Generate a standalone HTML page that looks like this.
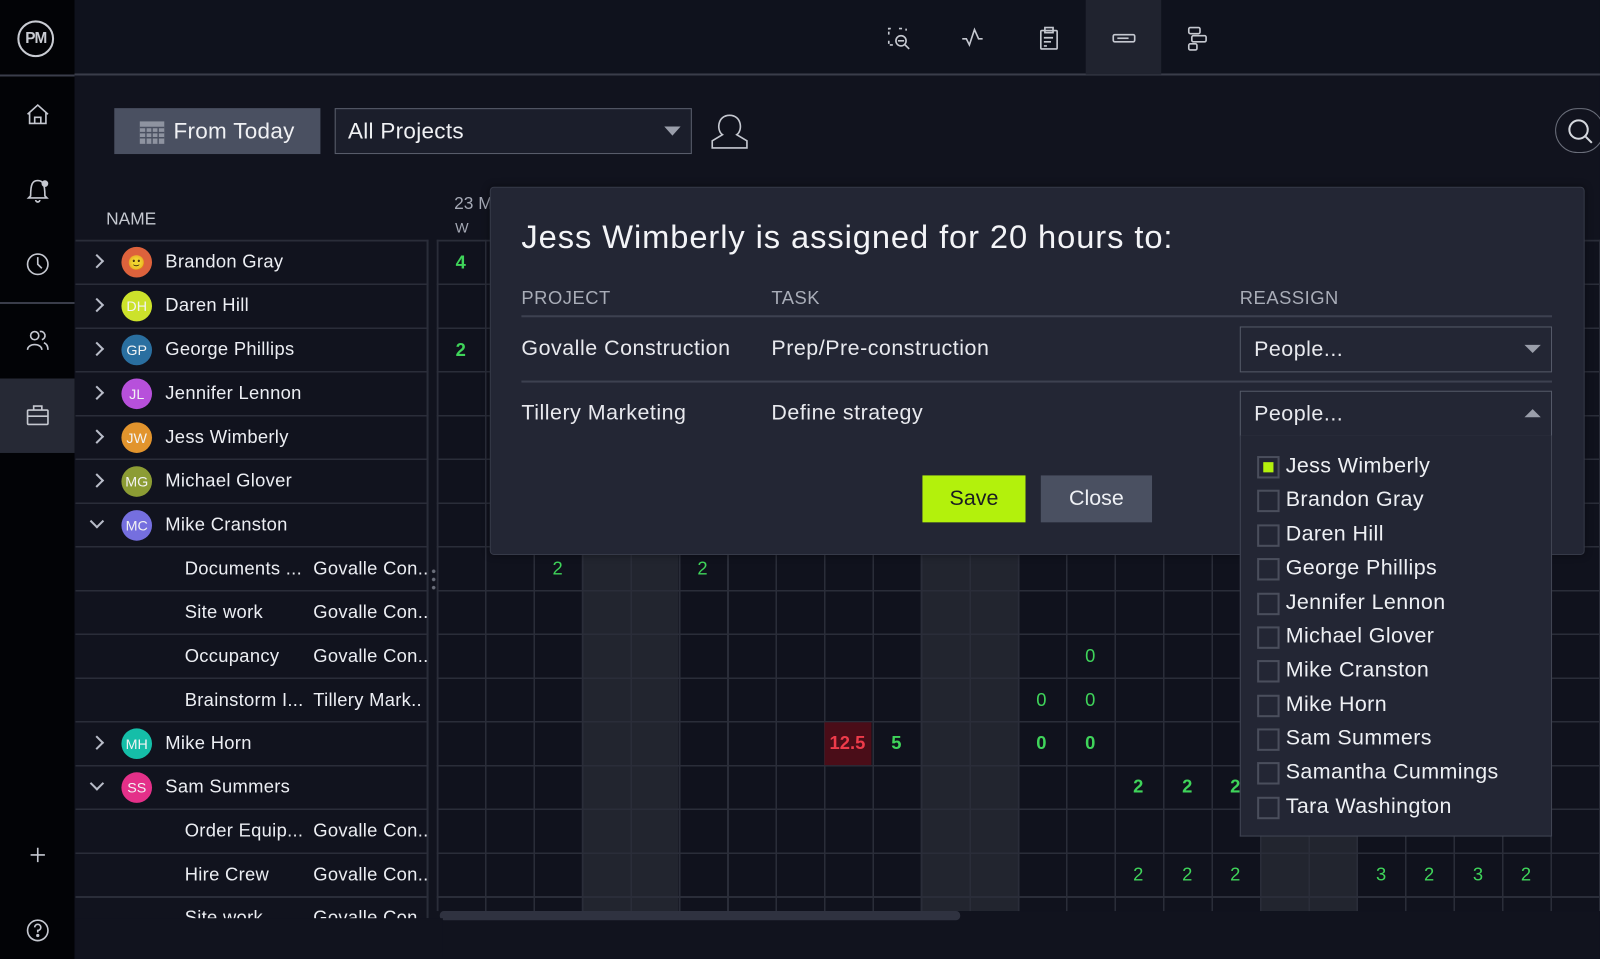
<!DOCTYPE html>
<html><head><meta charset="utf-8"><style>
*{margin:0;padding:0;box-sizing:border-box}
html,body{width:1600px;height:959px;overflow:hidden;background:#11131e}
#w{position:absolute;left:0;top:0;width:1568px;height:940px;transform:scale(1.0204,1.0202);transform-origin:0 0;font-family:"Liberation Sans",sans-serif;color:#e8e9ee;background:#11131e}
.a{position:absolute}
.t{position:absolute;white-space:nowrap}
svg{position:absolute;overflow:visible}
.nm{font-size:18px;color:#eceef3;letter-spacing:.3px}
.av{position:absolute;width:30px;height:30px;border-radius:50%;color:#fff;font-size:14px;line-height:30px;text-align:center;opacity:.95}
.ch{position:absolute;left:90px;width:10px;height:10px;border-right:2px solid #b8bcc8;border-top:2px solid #b8bcc8;transform:rotate(45deg)}
.g{position:absolute;color:#3fd45a;font-size:18px;text-align:center;width:47px}
.b{font-weight:bold}
.cb{position:absolute;left:16px;width:22px;height:22px;border:2px solid #4a4e5c}
.dl{position:absolute;left:44px;font-size:21px;color:#eef0f4;white-space:nowrap;letter-spacing:.4px}
.md{letter-spacing:.5px}
</style></head><body><div id="w">
<div class="a" style="left:0;top:0;width:1568px;height:74px;background:#0f121d;border-bottom:2px solid #3a3d4a"></div>
<div class="a" style="left:1064px;top:0;width:74px;height:73px;background:#20232f"></div>
<div class="a" style="left:0;top:0;width:73px;height:940px;background:#020306"></div>
<div class="a" style="left:0;top:73px;width:73px;height:2px;background:#3a3d4a"></div>
<div class="a" style="left:0;top:296px;width:73px;height:2px;background:#3a3d4a"></div>
<div class="a" style="left:0;top:371px;width:73px;height:73px;background:#262935"></div>
<div class="a" style="left:17px;top:20px;width:36px;height:36px;border:2.5px solid #c9ccd3;border-radius:50%;font-size:15px;font-weight:bold;color:#c9ccd3;text-align:center;line-height:31px;letter-spacing:-1px">PM</div>
<svg width="73" height="940" style="left:0;top:0" fill="none" stroke="#c5c8d0" stroke-width="1.6">
<path d="M27 112 L37 103 L47 112 M29 110 V121 H45 V110 M34 121 V115 H40 V121"/>
<path d="M30 192 C30 180 32 177 37 177 C42 177 44 180 44 192 L46 194 H28 Z M35 196 A2 2 0 0 0 39 196"/><circle cx="44" cy="180" r="2.5" fill="#c5c8d0"/>
<circle cx="37" cy="259" r="10"/><path d="M37 252 V259 L41 263"/>
<circle cx="34" cy="329" r="4"/><path d="M27 343 C27 336 41 336 41 343 M39 325 A4 4 0 0 1 41 333 M43 336 C46 337 47 340 47 343"/>
<rect x="27" y="402" width="20" height="14" rx="1"/><path d="M33 402 V398 H41 V402 M27 408 H47"/>
<path d="M37 831 V845 M30 838 H44"/>
<circle cx="37" cy="912" r="10"/><path d="M34 909 A3 3 0 1 1 37 912 V914"/><circle cx="37" cy="917" r=".8" fill="#c5c8d0"/>
</svg>
<svg width="400" height="74" style="left:840px;top:0" fill="none" stroke="#c5c8d0" stroke-width="1.6">
<path d="M31 34 V28 H35 M41 28 H44 M48 28 V30 M31 40 V44 H35" stroke-dasharray="3 2"/><circle cx="43" cy="40" r="5"/><path d="M40 40 H46 M47 44 L51 48"/>
<path d="M103 38 H107 L110 44 L115 29 L119 38 H123"/>
<rect x="180" y="30" width="16" height="18" rx="1"/><rect x="184" y="27" width="8" height="5"/><path d="M183 37 H192 M183 41 H190 M183 45 H186"/>
<rect x="251" y="34" width="21" height="7" rx="1.5"/><path d="M255 37.5 H266"/>
<rect x="325" y="27" width="11" height="6" rx="1.5"/><rect x="328" y="35" width="14" height="6" rx="1.5"/><rect x="325" y="43" width="8" height="6" rx="1.5"/>
</svg>
<div class="a" style="left:112px;top:106px;width:202px;height:45px;background:#4a5061"></div>
<svg width="24" height="22" style="left:137px;top:119px"><rect x="0" y="0" width="24" height="22" fill="#8e93a0"/><g stroke="#4a5061" stroke-width="1.4"><path d="M0 6H24M0 11H24M0 16H24M6 6V22M12 6V22M18 6V22"/></g></svg>
<div class="t" style="left:170px;top:116px;font-size:22px;color:#f0f1f4;letter-spacing:.3px">From Today</div>
<div class="a" style="left:328px;top:106px;width:350px;height:45px;background:#1b1e2b;border:1.5px solid #5a5e6c"></div>
<div class="t" style="left:341px;top:116px;font-size:22px;color:#f0f1f4;letter-spacing:.3px">All Projects</div>
<div class="a" style="left:651px;top:124px;border-left:8px solid transparent;border-right:8px solid transparent;border-top:9px solid #9a9eaa"></div>
<svg width="40" height="40" style="left:696px;top:108px" fill="none" stroke="#c5c8d0" stroke-width="1.6"><path d="M12 24 C6 20 7 5 19 5 C31 5 32 20 26 24 L36 30 V37 H2 V30 Z"/></svg>
<div class="a" style="left:1524px;top:106px;width:48px;height:44px;border:1.5px solid #6a6e7a;border-radius:22px"></div>
<svg width="30" height="30" style="left:1534px;top:114px" fill="none" stroke="#d5d8de" stroke-width="2"><circle cx="13" cy="13" r="9"/><path d="M20 20 L26 26"/></svg>
<div class="t" style="left:104px;top:205px;font-size:17px;color:#c5c8d0">NAME</div>
<div class="t" style="left:445px;top:190px;font-size:17px;color:#a5a9b5">23 M</div>
<div class="t" style="left:446px;top:215px;font-size:14px;color:#a5a9b5">W</div>
<div class="a" style="left:74px;top:235px;width:346px;height:665px;background:repeating-linear-gradient(to bottom,#2a2d39 0 1.5px,transparent 1.5px 42.9px)"></div>
<div class="a" style="left:418px;top:235px;width:2px;height:665px;background:#2a2d39"></div>
<div class="a" style="left:431px;top:235px;width:1137px;height:658px;background:#10121d"></div>
<div class="a" style="left:570px;top:235px;width:95px;height:658px;background:#22252f"></div>
<div class="a" style="left:902px;top:235px;width:95px;height:658px;background:#22252f"></div>
<div class="a" style="left:1235px;top:235px;width:95px;height:658px;background:#22252f"></div>
<div class="a" style="left:428px;top:235px;width:1140px;height:658px;background:repeating-linear-gradient(to right,#2a2d39 0 1.5px,transparent 1.5px 47.45px),repeating-linear-gradient(to bottom,#2a2d39 0 1.5px,transparent 1.5px 42.9px)"></div>
<div class="a" style="left:431px;top:893px;width:510px;height:9px;background:#2f3240;border-radius:4px"></div>
<div class="a" style="left:104px;top:934px;width:168px;height:6px;background:#3a3d4a"></div>
<div class="a" style="left:423px;top:556px;width:4px;height:24px;background:radial-gradient(circle,#6a6e7a 1.5px,transparent 2px) 0 0/4px 8px"></div>
<div class="ch" style="top:251px"></div><div class="av" style="left:119px;top:242px;background:#e8673e">🙂</div><div class="t nm" style="left:162px;top:246px">Brandon Gray</div>
<div class="ch" style="top:294px"></div><div class="av" style="left:119px;top:285px;background:#d7ee2c">DH</div><div class="t nm" style="left:162px;top:289px">Daren Hill</div>
<div class="ch" style="top:337px"></div><div class="av" style="left:119px;top:328px;background:#2c74a8">GP</div><div class="t nm" style="left:162px;top:332px">George Phillips</div>
<div class="ch" style="top:380px"></div><div class="av" style="left:119px;top:371px;background:#c054e6">JL</div><div class="t nm" style="left:162px;top:375px">Jennifer Lennon</div>
<div class="ch" style="top:423px"></div><div class="av" style="left:119px;top:414px;background:#ee9b2e">JW</div><div class="t nm" style="left:162px;top:418px">Jess Wimberly</div>
<div class="ch" style="top:466px"></div><div class="av" style="left:119px;top:457px;background:#93a436">MG</div><div class="t nm" style="left:162px;top:461px">Michael Glover</div>
<div class="ch" style="top:506px;transform:rotate(135deg)"></div><div class="av" style="left:119px;top:500px;background:#7b74ea">MC</div><div class="t nm" style="left:162px;top:504px">Mike Cranston</div>
<div class="t nm" style="left:181px;top:547px">Documents ...</div><div class="t nm" style="left:307px;top:547px">Govalle Con..</div>
<div class="t nm" style="left:181px;top:590px">Site work</div><div class="t nm" style="left:307px;top:590px">Govalle Con..</div>
<div class="t nm" style="left:181px;top:633px">Occupancy</div><div class="t nm" style="left:307px;top:633px">Govalle Con..</div>
<div class="t nm" style="left:181px;top:676px">Brainstorm I...</div><div class="t nm" style="left:307px;top:676px">Tillery Mark..</div>
<div class="ch" style="top:723px"></div><div class="av" style="left:119px;top:714px;background:#16c8b0">MH</div><div class="t nm" style="left:162px;top:718px">Mike Horn</div>
<div class="ch" style="top:763px;transform:rotate(135deg)"></div><div class="av" style="left:119px;top:757px;background:#f0328f">SS</div><div class="t nm" style="left:162px;top:761px">Sam Summers</div>
<div class="t nm" style="left:181px;top:804px">Order Equip...</div><div class="t nm" style="left:307px;top:804px">Govalle Con..</div>
<div class="t nm" style="left:181px;top:847px">Hire Crew</div><div class="t nm" style="left:307px;top:847px">Govalle Con..</div>
<div class="t nm" style="left:181px;top:889px">Site work</div><div class="t nm" style="left:307px;top:889px">Govalle Con..</div>
<div class="a" style="left:74px;top:900px;width:360px;height:40px;background:#11131e"></div>
<div class="g b" style="left:428px;top:247px">4</div>
<div class="g b" style="left:428px;top:333px">2</div>
<div class="g" style="left:523px;top:547px">2</div><div class="g" style="left:665px;top:547px">2</div>
<div class="g" style="left:1045px;top:633px">0</div>
<div class="g" style="left:997px;top:676px">0</div><div class="g" style="left:1045px;top:676px">0</div>
<div class="a" style="left:808px;top:708px;width:46px;height:42px;background:#4a0d18"></div>
<div class="g b" style="left:807px;top:718px;color:#ee3b4a">12.5</div><div class="g b" style="left:855px;top:718px">5</div>
<div class="g b" style="left:997px;top:718px">0</div><div class="g b" style="left:1045px;top:718px">0</div>
<div class="g b" style="left:1092px;top:761px">2</div><div class="g b" style="left:1140px;top:761px">2</div><div class="g b" style="left:1187px;top:761px">2</div>
<div class="g" style="left:1092px;top:847px">2</div><div class="g" style="left:1140px;top:847px">2</div><div class="g" style="left:1187px;top:847px">2</div>
<div class="g" style="left:1330px;top:847px">3</div><div class="g" style="left:1377px;top:847px">2</div><div class="g" style="left:1425px;top:847px">3</div><div class="g" style="left:1472px;top:847px">2</div>
<div class="a" style="left:480px;top:183px;width:1073px;height:361px;background:#232634;border:1.5px solid #363a48;border-radius:4px;box-shadow:0 0 8px rgba(0,0,0,.4)"></div>
<div class="t" style="left:511px;top:214px;font-size:32px;color:#f3f4f7;letter-spacing:.9px">Jess Wimberly is assigned for 20 hours to:</div>
<div class="t" style="left:511px;top:282px;font-size:18px;color:#a9adb8;letter-spacing:.5px">PROJECT</div>
<div class="t" style="left:756px;top:282px;font-size:18px;color:#a9adb8;letter-spacing:.5px">TASK</div>
<div class="t" style="left:1215px;top:282px;font-size:18px;color:#a9adb8;letter-spacing:.5px">REASSIGN</div>
<div class="a" style="left:511px;top:309px;width:1010px;height:1.5px;background:#3d4150"></div>
<div class="a" style="left:511px;top:373px;width:1010px;height:1.5px;background:#3d4150"></div>
<div class="t md" style="left:511px;top:330px;font-size:21px">Govalle Construction</div>
<div class="t md" style="left:756px;top:330px;font-size:21px">Prep/Pre-construction</div>
<div class="t md" style="left:511px;top:393px;font-size:21px">Tillery Marketing</div>
<div class="t md" style="left:756px;top:393px;font-size:21px">Define strategy</div>
<div class="a" style="left:1215px;top:320px;width:306px;height:45px;border:1.5px solid #555a68;background:#232634"></div>
<div class="t md" style="left:1229px;top:331px;font-size:21px">People...</div>
<div class="a" style="left:1494px;top:338px;border-left:8px solid transparent;border-right:8px solid transparent;border-top:8px solid #9a9eaa"></div>
<div class="a" style="left:1215px;top:383px;width:306px;height:45px;border:1.5px solid #555a68;background:#232634"></div>
<div class="t md" style="left:1229px;top:394px;font-size:21px">People...</div>
<div class="a" style="left:1494px;top:401px;border-left:8px solid transparent;border-right:8px solid transparent;border-bottom:8px solid #9a9eaa"></div>
<div class="a" style="left:904px;top:466px;width:101px;height:46px;background:#b3f10c"></div>
<div class="t" style="left:904px;top:477px;width:101px;text-align:center;font-size:21px;color:#1a1c22">Save</div>
<div class="a" style="left:1020px;top:466px;width:109px;height:46px;background:#4a5061"></div>
<div class="t" style="left:1020px;top:477px;width:109px;text-align:center;font-size:21px;color:#eef0f4">Close</div>
<div class="a" style="left:1215px;top:427px;width:306px;height:393px;background:#232634;border:1.5px solid #404453;border-top:none">
<div class="cb" style="top:20px"><div class="a" style="left:4px;top:4px;width:10px;height:10px;background:#b3f10c"></div></div><div class="dl" style="top:18px">Jess Wimberly</div>
<div class="cb" style="top:53px"></div><div class="dl" style="top:51px">Brandon Gray</div>
<div class="cb" style="top:87px"></div><div class="dl" style="top:85px">Daren Hill</div>
<div class="cb" style="top:120px"></div><div class="dl" style="top:118px">George Phillips</div>
<div class="cb" style="top:154px"></div><div class="dl" style="top:152px">Jennifer Lennon</div>
<div class="cb" style="top:187px"></div><div class="dl" style="top:185px">Michael Glover</div>
<div class="cb" style="top:220px"></div><div class="dl" style="top:218px">Mike Cranston</div>
<div class="cb" style="top:254px"></div><div class="dl" style="top:252px">Mike Horn</div>
<div class="cb" style="top:287px"></div><div class="dl" style="top:285px">Sam Summers</div>
<div class="cb" style="top:320px"></div><div class="dl" style="top:318px">Samantha Cummings</div>
<div class="cb" style="top:354px"></div><div class="dl" style="top:352px">Tara Washington</div>
</div>
</div></body></html>
